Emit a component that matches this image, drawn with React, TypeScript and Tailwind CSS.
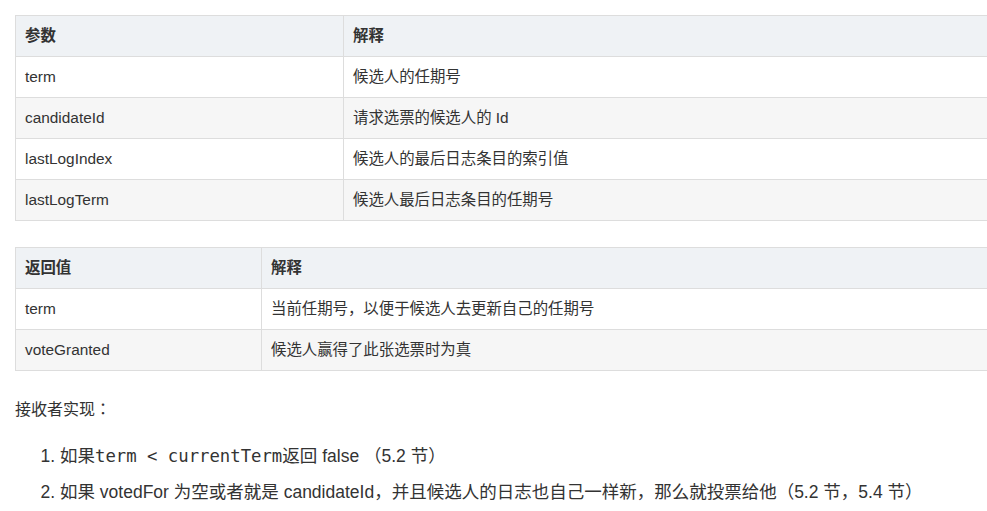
const params = [
  ['term', '候选人的任期号'],
  ['candidateId', '请求选票的候选人的 Id'],
  ['lastLogIndex', '候选人的最后日志条目的索引值'],
  ['lastLogTerm', '候选人最后日志条目的任期号'],
]

const results = [
  ['term', '当前任期号，以便于候选人去更新自己的任期号'],
  ['voteGranted', '候选人赢得了此张选票时为真'],
]

function DocTable({ head, rows, firstCol }: { head: string[]; rows: string[][]; firstCol: string }) {
  return (
    <table className="table-fixed border-collapse w-[1100px] text-[15.4px] leading-[20px] text-[#333]">
      <colgroup>
        <col className={firstCol} />
        <col />
      </colgroup>
      <thead>
        <tr className="bg-[#eff2f5]">
          {head.map((h) => (
            <th key={h} className="border border-[#dddddd] px-[9px] py-[10px] text-left font-bold">
              {h}
            </th>
          ))}
        </tr>
      </thead>
      <tbody>
        {rows.map((r, i) => (
          <tr key={r[0]} className={i % 2 === 1 ? 'bg-[#f6f6f6]' : 'bg-white'}>
            {r.map((c) => (
              <td key={c} className="border border-[#dddddd] px-[9px] py-[10px]">
                {c}
              </td>
            ))}
          </tr>
        ))}
      </tbody>
    </table>
  )
}

export default function App() {
  return (
    <div
      className="w-[987px] h-[511px] overflow-hidden bg-white pt-[15px] pl-[15px] text-[#333]"
      style={{ fontFamily: '"Liberation Sans", "Noto Sans CJK JP", sans-serif' }}
    >
      <DocTable head={['参数', '解释']} rows={params} firstCol="w-[328px]" />

      <div className="mt-[26px]">
        <DocTable head={['返回值', '解释']} rows={results} firstCol="w-[246px]" />
      </div>

      {/* receiver notes */}
      <p className="mt-[26px] text-[16px] leading-[26px]">接收者实现：</p>

      <ol className="mt-[19px] list-decimal pl-[45px] text-[17.5px] leading-[28px]">
        <li>
          如果<code className="font-['DejaVu_Sans_Mono',monospace] text-[17.3px]">term &lt; currentTerm</code>返回 false （5.2 节）
        </li>
        <li className="mt-2">
          如果 votedFor 为空或者就是 candidateId，并且候选人的日志也自己一样新，那么就投票给他（5.2 节，5.4 节）
        </li>
      </ol>
    </div>
  )
}
